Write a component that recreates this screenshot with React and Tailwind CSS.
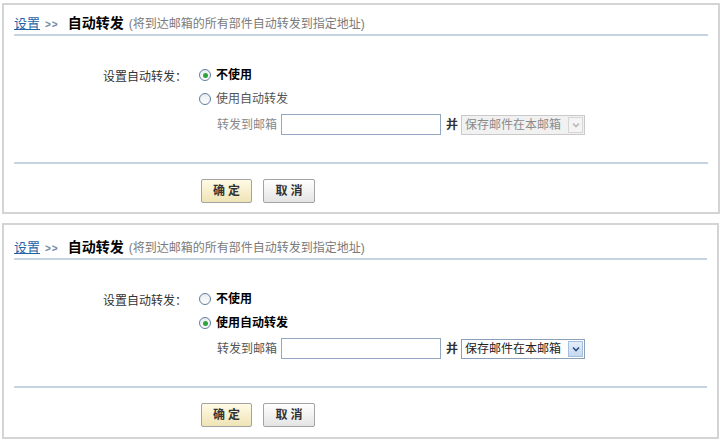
import React from 'react';

const font = { fontFamily: '"Liberation Sans", "Noto Sans CJK SC", sans-serif' };

const Radio = ({ checked }) => (
  <span className="w-[12px] h-[12px] rounded-full border border-[#5f7d99] bg-gradient-to-b from-[#e6ecf2] to-white flex items-center justify-center shrink-0">
    {checked && <span className="w-[5px] h-[5px] rounded-full bg-[#2fa33c]" />}
  </span>
);

const Select = ({ disabled }) => (
  <div className={`flex items-center h-[20px] w-[124px] border ${disabled ? 'border-[#c9c9c9] bg-[#f1f1f1] text-[#8a8a8a]' : 'border-[#8aa0b8] bg-white text-[#222]'}`}>
    <span className="flex-1 pl-[3px] text-[12px] leading-none">保存邮件在本邮箱</span>
    <span className={`w-[15px] h-[16px] mr-[1px] flex items-center justify-center border ${disabled ? 'border-[#d6d6d6] bg-[#f4f4f4]' : 'border-[#a6bedb] bg-gradient-to-b from-[#e4eefa] to-[#c5d8ef]'}`}>
      <svg width="8" height="6" viewBox="0 0 8 6">
        <path d="M1 1.5 L4 4.5 L7 1.5" fill="none" stroke={disabled ? '#b8b8b8' : '#2f4f86'} strokeWidth="1.6" />
      </svg>
    </span>
  </div>
);

const Panel = ({ forward, className, headerClass }) => (
  <div className={`border-2 border-[#d4d4d4] bg-white ${className}`}>
    {/* Header */}
    <div className={`mx-[10px] flex items-end pb-[4px] border-b-2 border-[#c4d4e2] ${headerClass}`}>
      <a className="text-[13px] text-[#2563a6] underline leading-none">设置</a>
      <span className="ml-[5px] text-[10px] text-[#6b86a3] font-bold tracking-[1px] leading-none">&gt;&gt;</span>
      <span className="ml-[9px] text-[14px] font-bold text-black leading-none">自动转发</span>
      <span className="ml-[5px] text-[12px] text-[#7a7a7a] leading-none">(将到达邮箱的所有部件自动转发到指定地址)</span>
    </div>

    {/* Form */}
    <div className="flex pl-[99px] pt-[31px] h-[126px] text-[12px] text-[#333]">
      <div className="w-[96px] pt-[1px]">设置自动转发：</div>
      <div className="flex flex-col">
        <label className="flex items-center gap-[5px] h-[16px]">
          <Radio checked={!forward} />
          <span className="font-bold text-black">不使用</span>
        </label>
        <label className="flex items-center gap-[5px] h-[16px] mt-[8px]">
          <Radio checked={forward} />
          <span className={forward ? 'font-bold text-black' : 'text-[#555]'}>使用自动转发</span>
        </label>
        <div className="flex items-center mt-[7px] ml-[18px]">
          <span className={forward ? 'text-[#555]' : 'text-[#888]'}>转发到邮箱</span>
          <span className="ml-[4px] w-[160px] h-[21px] border border-[#92a8c0] bg-white" />
          <span className="ml-[5px] mr-[3px] font-bold text-[#333]">并</span>
          <Select disabled={!forward} />
        </div>
      </div>
    </div>

    {/* Footer */}
    <div className="mx-[10px] border-t-2 border-[#c4d4e2] pt-[15px] pl-[187px] flex gap-[11px]">
      <button className="w-[51px] h-[24px] rounded-[2px] border border-[#a3a3a3] bg-gradient-to-b from-[#fffbe6] to-[#efe4b6] text-[12px] font-bold text-[#333] tracking-[3px] pl-[3px]">确定</button>
      <button className="w-[52px] h-[24px] rounded-[2px] border border-[#a3a3a3] bg-gradient-to-b from-[#ffffff] to-[#e4e4e4] text-[12px] font-bold text-[#333] tracking-[3px] pl-[3px]">取消</button>
    </div>
  </div>
);

export default function App() {
  return (
    <div className="w-[724px] h-[441px] bg-white pt-[3px] pl-[2px]" style={font}>
      <Panel className="w-[718px] h-[211px]" headerClass="h-[31px]" />
      <Panel forward className="w-[717px] h-[216px] mt-[9px]" headerClass="h-[35px]" />
    </div>
  );
}
